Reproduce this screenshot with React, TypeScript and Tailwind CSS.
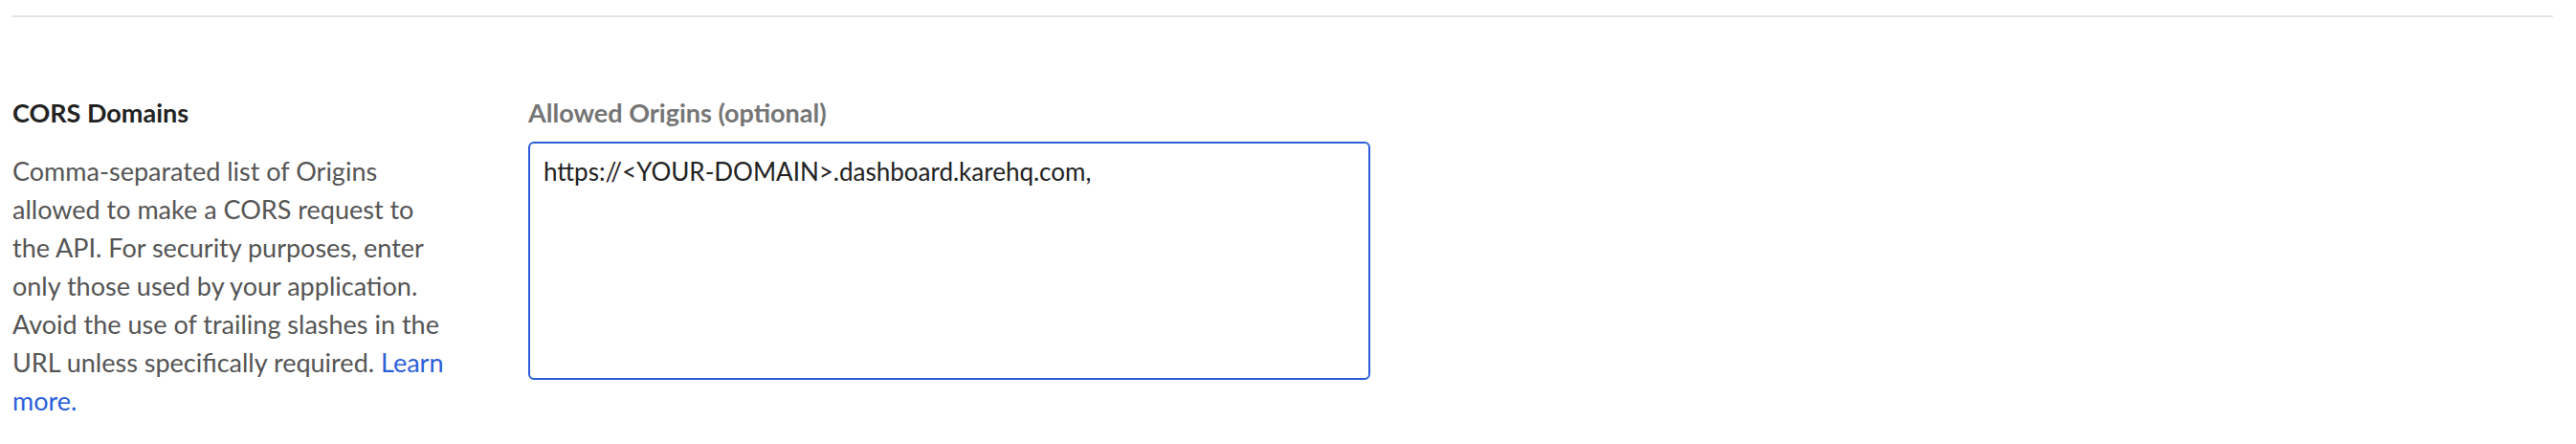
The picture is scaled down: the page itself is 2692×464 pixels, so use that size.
import { useState } from 'react';

export default function App() {
    const [origins, setOrigins] = useState('https://<YOUR-DOMAIN>.dashboard.karehq.com,');

    return (
        <div className="min-h-screen bg-white font-['Lato','Noto_Sans',sans-serif]">
            {/* separator */}
            <div className="pt-[16px] pl-[12px] pr-[24px]">
                <div className="h-[2px] bg-[#e6e6e6]" />
            </div>

            {/* CORS settings row */}
            <div className="flex pt-[84px] pl-[13px]">
                <div className="w-[458px] shrink-0">
                    <h3 className="text-[27px] leading-[32px] font-bold text-[#222222]">CORS Domains</h3>
                    <p className="mt-[25px] text-[27px] leading-[40px] text-[#555555]">
                        Comma-separated list of Origins allowed to make a CORS request to the API. For security purposes, enter only those used by your application. Avoid the use of trailing slashes in the URL unless specifically required.{' '}
                        <a href="#" className="text-[#2b5fd9]">Learn more.</a>
                    </p>
                </div>

                <div className="ml-[81px] w-[880px]">
                    <label className="block text-[27px] leading-[32px] font-bold text-[#757575]">Allowed Origins (optional)</label>
                    <textarea
                        value={origins}
                        onChange={(e) => setOrigins(e.target.value)}
                        className="mt-[14px] block w-full h-[249px] resize-none rounded-[6px] border-2 border-[#2b5fd9] px-[14px] pt-[11px] text-[26px] leading-[36px] text-[#222222] outline-none"
                    />
                </div>
            </div>
        </div>
    );
}
